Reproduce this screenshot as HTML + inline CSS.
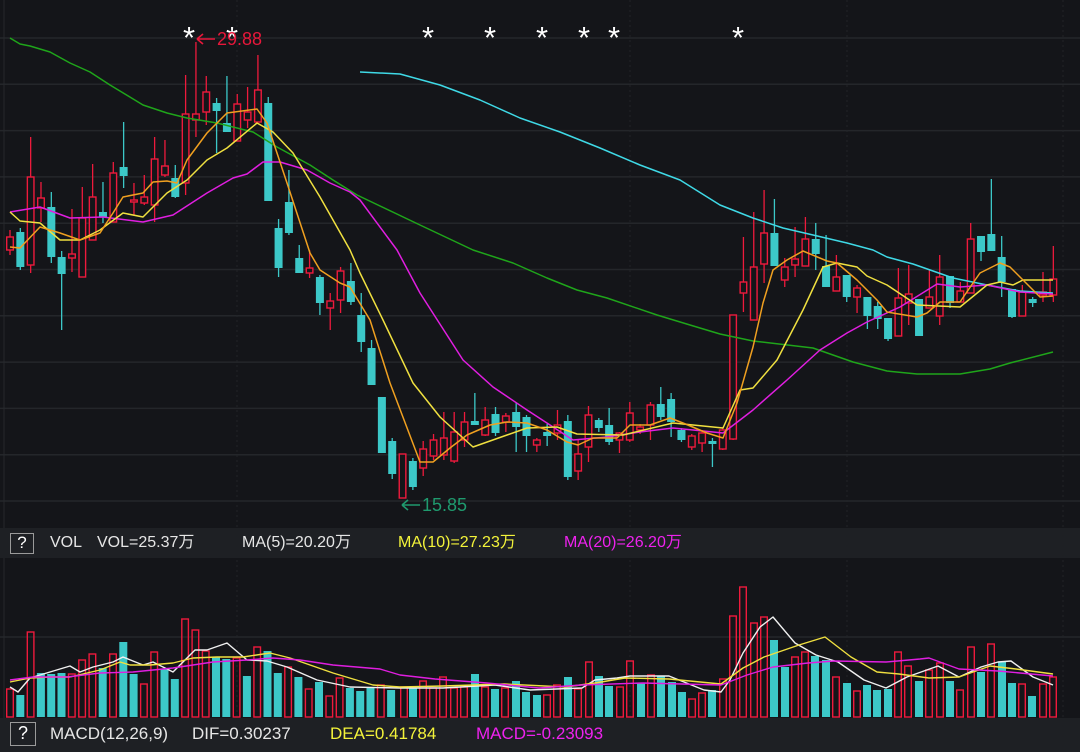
<!DOCTYPE html>
<html><head><meta charset="utf-8"><style>
html,body{margin:0;padding:0;background:#141519;width:1080px;height:752px;overflow:hidden;font-family:"Liberation Sans","Noto Sans CJK SC",sans-serif}
#c{position:absolute;left:0;top:0}
.bar{position:absolute;left:0;width:1080px;background:#1e2024;color:#e6e6e6;font-size:16px}
.bar span{position:absolute;white-space:nowrap;top:0}
.q{position:absolute;border:1.5px solid #9a9a9a;color:#fff;text-align:center;box-sizing:border-box}
.t{position:absolute;white-space:nowrap}
.s{position:absolute;color:#fff;font-size:31px;line-height:31px;top:22px}
</style></head><body>
<svg id="c" width="1080" height="752" xmlns="http://www.w3.org/2000/svg"></svg>
<div class="s" style="left:183px">*</div>
<div class="s" style="left:226px">*</div>
<div class="s" style="left:422px">*</div>
<div class="s" style="left:484px">*</div>
<div class="s" style="left:536px">*</div>
<div class="s" style="left:578px">*</div>
<div class="s" style="left:608px">*</div>
<div class="s" style="left:732px">*</div>
<div class="t" style="left:217px;top:29px;color:#e8173a;font-size:18px">29.88</div>
<div class="t" style="left:422px;top:495px;color:#1f9a6e;font-size:18px">15.85</div>
<div class="bar" style="top:528px;height:30px;line-height:30px">
<div class="q" style="left:10px;top:5px;width:24px;height:21px;font-size:17px;line-height:18px">?</div>
<span style="left:50px">VOL</span>
<span style="left:97px">VOL=25.37万</span>
<span style="left:242px">MA(5)=20.20万</span>
<span style="left:398px;color:#f3f33a">MA(10)=27.23万</span>
<span style="left:564px;color:#ee22ee">MA(20)=26.20万</span>
</div>
<div class="bar" style="top:718px;height:34px;font-size:17px;line-height:32px">
<div class="q" style="left:10px;top:4px;width:26px;height:24px;font-size:18px;line-height:21px">?</div>
<span style="left:50px">MACD(12,26,9)</span>
<span style="left:192px">DIF=0.30237</span>
<span style="left:330px;color:#f3f33a">DEA=0.41784</span>
<span style="left:476px;color:#ee22ee">MACD=-0.23093</span>
</div>
<script>
var s='';
var R='#ee1a3c',C='#3cc8c8';
for(var y=38;y<=505;y+=46.3)s+='<line x1="0" x2="1080" y1="'+y.toFixed(1)+'" y2="'+y.toFixed(1)+'" stroke="#24262a" stroke-width="1.5"/>';
s+='<line x1="0" x2="1080" y1="637" y2="637" stroke="#24262a" stroke-width="1.5"/>';
s+='<line x1="4" x2="4" y1="0" y2="720" stroke="#26282c" stroke-width="1"/>';
[237,630,847,1063].forEach(function(x){s+='<line x1="'+x+'" x2="'+x+'" y1="0" y2="720" stroke="#222428" stroke-dasharray="2,3"/>'});
// arrows
s+='<path d="M197 39 L215 39 M197 39 L203 34 M197 39 L203 44" stroke="#e8173a" stroke-width="1.6" fill="none"/>';
s+='<path d="M402 505 L420 505 M402 505 L408 500 M402 505 L408 510" stroke="#1f9a6e" stroke-width="1.6" fill="none"/>';
var K=[[237,250,230,255,'r'],[232,267,228,270,'c'],[177,265,137,273,'r'],[198,208,182,222,'r'],[207,257,192,263,'c'],[257,274,251,330,'c'],[254,258,209,272,'r'],[218,277,187,277,'r'],[197,240,164,240,'r'],[212,217,182,223,'c'],[173,222,162,222,'r'],[167,176,122,188,'c'],[200,202,183,215,'r'],[197,203,175,205,'r'],[159,205,137,222,'r'],[166,175,140,177,'r'],[178,197,165,198,'c'],[114,183,75,195,'r'],[114,120,42,137,'r'],[92,112,76,125,'r'],[103,111,98,153,'c'],[123,132,76,132,'c'],[104,141,94,141,'r'],[112,120,87,128,'r'],[90,122,55,122,'r'],[103,201,97,201,'c'],[228,268,219,277,'c'],[202,233,170,235,'c'],[258,273,245,273,'c'],[268,273,250,278,'r'],[277,303,275,315,'c'],[301,308,293,330,'r'],[271,300,267,313,'r'],[281,302,263,305,'c'],[315,342,293,352,'c'],[348,385,340,385,'c'],[397,453,397,453,'c'],[441,474,438,479,'c'],[454,498,454,498,'r'],[461,487,458,490,'c'],[449,468,441,476,'r'],[440,456,434,460,'r'],[438,455,412,460,'r'],[432,461,412,463,'r'],[422,440,412,447,'r'],[421,425,393,425,'c'],[420,435,407,436,'r'],[414,433,407,436,'c'],[416,422,413,432,'r'],[412,427,403,452,'c'],[417,436,415,452,'c'],[440,445,438,452,'r'],[432,436,424,446,'c'],[425,433,410,440,'r'],[421,477,415,480,'c'],[454,471,440,480,'r'],[415,447,406,462,'r'],[420,428,418,432,'c'],[425,442,408,445,'c'],[433,440,432,453,'r'],[413,440,402,442,'r'],[427,430,424,434,'r'],[405,425,402,440,'r'],[404,417,387,420,'c'],[399,422,393,437,'c'],[430,440,428,442,'c'],[436,447,434,450,'r'],[433,443,430,452,'r'],[441,444,438,467,'c'],[430,449,428,450,'r'],[315,439,315,440,'r'],[282,293,237,312,'r'],[267,320,212,320,'r'],[233,264,190,283,'r'],[233,266,199,266,'c'],[267,280,258,287,'r'],[259,265,227,277,'r'],[239,266,217,266,'r'],[239,254,223,270,'c'],[266,287,235,287,'c'],[277,291,255,291,'r'],[275,297,275,302,'c'],[288,297,285,313,'r'],[297,316,297,329,'c'],[306,319,302,329,'c'],[318,339,318,341,'c'],[298,336,268,336,'r'],[294,303,265,325,'r'],[299,336,299,336,'c'],[297,308,270,308,'r'],[277,316,255,325,'r'],[276,303,276,308,'c'],[291,302,282,302,'r'],[239,293,223,293,'r'],[236,252,236,261,'c'],[234,251,179,251,'c'],[257,282,236,297,'c'],[289,317,289,318,'c'],[292,316,285,316,'r'],[299,303,297,307,'c'],[292,295,272,302,'r'],[279,295,246,302,'r']];
K.forEach(function(k,i){var x=10+i*10.33;var col=k[4]=='r'?R:C;
s+='<line x1="'+x+'" x2="'+x+'" y1="'+k[2]+'" y2="'+k[3]+'" stroke="'+col+'" stroke-width="1.3"/>';
var h=Math.max(k[1]-k[0],2);
if(k[4]=='r')s+='<rect x="'+(x-3.3)+'" y="'+k[0]+'" width="6.6" height="'+h+'" fill="#141519" stroke="'+R+'" stroke-width="1.4"/>';
else s+='<rect x="'+(x-4)+'" y="'+k[0]+'" width="8" height="'+h+'" fill="'+C+'"/>';});
function pl(p,c,w){s+='<polyline fill="none" stroke="'+c+'" stroke-width="'+(w||1.5)+'" stroke-linejoin="round" points="'+p+'"/>';}
pl('10,38 20,44 30,46 50,52 70,63 90,72 110,85 143,105 167,113 187,118 217,123 253,132 277,147 310,165 333,180 357,195 420,225 473,250 513,263 547,278 577,290 607,298 657,315 690,325 720,334 753,341 813,348 853,362 887,371 917,374 960,374 990,369 1010,363 1053,352','#1fa51a');
pl('360,72 400,74 440,85 480,100 520,118 560,132 600,148 640,165 680,180 720,205 753,218 783,228 813,235 847,243 873,250 887,257 913,264 953,278 987,285 1020,291 1053,293','#3fd9e6');
pl('10,212 40,207 70,218 103,217 143,222 173,215 207,193 233,178 247,174 263,162 280,162 307,170 330,183 350,192 360,200 397,250 420,293 463,360 493,387 527,410 573,440 607,437 640,432 673,428 723,433 740,420 753,410 787,380 820,350 847,333 867,322 900,307 937,284 960,287 987,285 1020,292 1053,294','#e01ee0');
pl('10,212 20,221 40,223 60,240 80,240 100,230 123,213 143,217 167,193 187,180 207,160 227,148 257,123 273,132 293,153 320,197 350,250 360,273 383,320 413,383 440,417 473,447 507,435 527,428 557,427 577,434 623,435 673,423 723,428 740,390 753,388 777,360 803,310 823,267 837,263 857,267 867,276 887,285 917,305 960,307 987,285 1000,282 1013,285 1023,280 1053,280','#f0e040');
pl('10,247 20,248 40,227 60,233 80,240 100,233 113,213 123,197 143,193 153,182 167,181 177,183 187,160 207,133 227,113 257,109 267,123 287,183 310,253 320,270 340,283 350,287 370,320 390,383 420,462 433,462 450,448 467,435 490,425 507,422 527,423 547,430 567,442 578,445 593,438 617,438 630,425 650,425 670,418 683,423 707,433 723,438 737,403 753,347 763,303 773,270 787,260 803,251 827,261 837,263 857,280 877,300 887,312 917,317 927,313 940,302 960,302 973,283 980,273 1000,263 1010,267 1020,277 1040,297 1053,296','#f0a020');
var V1=[[689,'r'],[695,'c'],[632,'r'],[673,'c'],[674,'c'],[673,'c'],[674,'r'],[660,'r'],[654,'r'],[668,'c'],[654,'r'],[642,'c'],[674,'c'],[684,'r'],[652,'r'],[669,'c'],[679,'c'],[619,'r'],[630,'r'],[651,'r'],[657,'c'],[659,'c'],[658,'r'],[676,'c'],[647,'r'],[651,'c'],[673,'c'],[667,'r'],[677,'c'],[689,'r'],[682,'c'],[696,'r'],[678,'r'],[688,'c'],[691,'c'],[687,'c'],[685,'r'],[690,'c']];
var V=[];V1.forEach(function(v,i){V.push([10+i*10.3,v[0],v[1]])});
var V2=[[404,687,'r'],[413,688,'c'],[423,681,'r'],[433,688,'r'],[443,677,'r'],[454,688,'r'],[464,687,'r'],[475,674,'c'],[485,687,'r'],[495,689,'c'],[505,688,'r'],[516,681,'c'],[526,692,'c'],[537,695,'c'],[547,695,'r'],[557,685,'r'],[568,677,'c'],[578,689,'r'],[589,662,'r'],[599,676,'c'],[609,686,'c'],[620,687,'r'],[630,661,'r'],[641,683,'c'],[651,675,'r'],[661,676,'c'],[672,682,'c'],[682,692,'c'],[692,699,'r'],[702,693,'r'],[712,690,'c'],[723,679,'r'],[733,616,'r'],[743,587,'r'],[754,623,'r'],[764,617,'r'],[774,640,'c'],[785,667,'c'],[795,657,'r'],[805,652,'r'],[815,656,'c'],[826,660,'c'],[836,677,'r'],[847,683,'c'],[857,691,'r'],[867,685,'c'],[877,690,'c'],[888,689,'c'],[898,652,'r'],[908,666,'r'],[919,681,'c'],[929,670,'r'],[940,663,'r'],[950,681,'c'],[960,690,'r'],[971,647,'r'],[981,672,'c'],[991,644,'r'],[1002,662,'c'],[1012,683,'c'],[1022,684,'r'],[1032,696,'c'],[1043,684,'r'],[1053,677,'r']];
V=V.concat(V2);
V.forEach(function(v){var h=717-v[1];
if(v[2]=='r')s+='<rect x="'+(v[0]-3.3)+'" y="'+v[1]+'" width="6.6" height="'+h+'" fill="none" stroke="'+R+'" stroke-width="1.4"/>';
else s+='<rect x="'+(v[0]-4)+'" y="'+v[1]+'" width="8" height="'+h+'" fill="'+C+'"/>';});
pl('10,687 18,692 30,678 50,672 70,666 80,672 93,667 113,662 123,657 143,665 153,662 173,672 195,650 207,650 227,643 247,660 267,661 287,667 317,680 350,687 400,688 443,688 495,685 530,690 582,688 595,680 617,678 630,676 669,676 704,690 721,692 730,680 743,653 760,627 773,617 795,643 816,655 838,662 864,680 886,688 907,677 938,666 959,677 981,667 998,662 1011,661 1033,677 1053,685','#f0f0f0',1.4);
pl('10,682 30,678 50,677 70,677 100,670 120,662 130,665 150,665 173,663 193,658 217,657 243,657 270,653 290,658 333,673 373,685 400,687 443,686 504,684 565,687 595,683 625,678 669,679 721,684 743,668 764,657 799,645 825,637 851,657 877,672 899,674 929,678 959,677 990,666 1016,669 1053,674','#f0e040',1.4);
pl('10,680 33,677 67,677 100,673 133,672 173,668 193,665 213,662 247,660 273,658 300,660 333,665 380,669 400,675 435,679 487,683 539,688 582,685 643,683 721,685 747,675 773,667 808,663 834,661 886,662 920,659 929,658 959,669 998,671 1053,676','#e01ee0',1.4);
document.getElementById('c').innerHTML=s;
</script>
</body></html>
